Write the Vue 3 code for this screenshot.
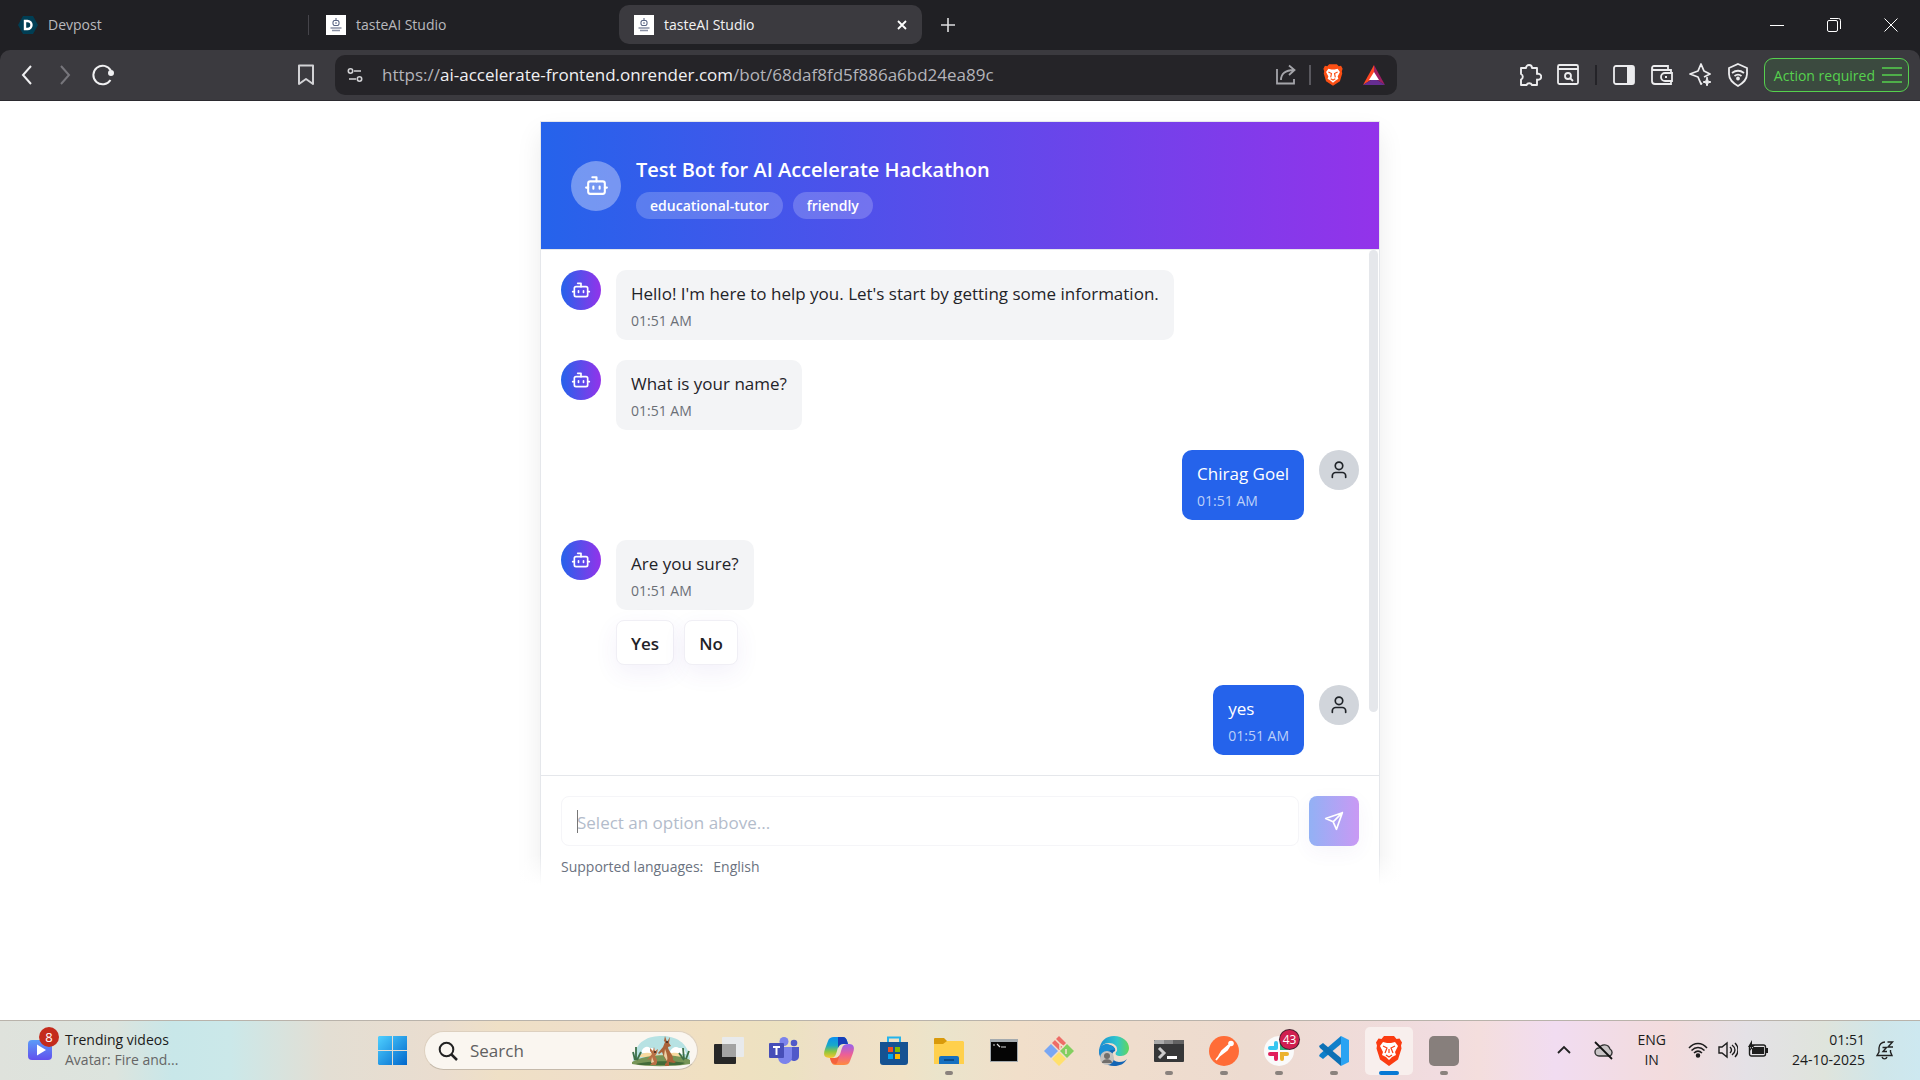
<script setup>
import { ref } from 'vue'

const draft = ref('')
const url = { scheme: 'https://', host: 'ai-accelerate-frontend.onrender.com', path: '/bot/68daf8fd5f886a6bd24ea89c' }

const tabs = [
  { id: 1, title: 'Devpost', icon: 'devpost' },
  { id: 2, title: 'tasteAI Studio', icon: 'taste' },
  { id: 3, title: 'tasteAI Studio', icon: 'taste', active: true },
]

const messages = [
  { id: 1, from: 'bot', text: "Hello! I'm here to help you. Let's start by getting some information.", time: '01:51 AM' },
  { id: 2, from: 'bot', text: 'What is your name?', time: '01:51 AM' },
  { id: 3, from: 'user', text: 'Chirag Goel', time: '01:51 AM' },
  { id: 4, from: 'bot', text: 'Are you sure?', time: '01:51 AM', options: ['Yes', 'No'] },
  { id: 5, from: 'user', text: 'yes', time: '01:51 AM' },
]
</script>

<template>
  <div class="desktop">
    <header class="browser">
      <div class="tabstrip">
        <div v-for="tab in tabs" :key="tab.id" class="tab" :class="{ active: tab.active, divided: tab.id === 1 }">
          <svg v-if="tab.icon === 'devpost'" class="favicon" viewBox="0 0 20 20">
            <path d="M5 1h10l5 9-5 9H5l-5-9z" fill="#003e54" />
            <path d="M7 6v8h2.500a4 4 0 0 0 0-8z" fill="none" stroke="#fff" stroke-width="2.400" />
          </svg>
          <svg v-else class="favicon" viewBox="0 0 20 20">
            <path d="M0 0h20v20H0z" fill="#fff" />
            <path d="M10 3v2M8 5.500h4l1 1.500v2l-1 1.500H8L7 9V7zM9 8h2" fill="none" stroke="#5c6784" stroke-width="1.100" />
            <path d="M4.500 13h11M6 15.500h8" stroke="#8a91a5" stroke-width="1.500" />
          </svg>
          <span class="tab-title">{{ tab.title }}</span>
          <button v-if="tab.active" class="icon-btn tab-close" aria-label="Close tab">
            <svg width="10" height="10" viewBox="0 0 10 10"><path d="M1 1l8 8M9 1L1 9" stroke="#fff" stroke-width="1.800" /></svg>
          </button>
        </div>
        <button class="icon-btn new-tab" aria-label="New tab">
          <svg width="14" height="14" viewBox="0 0 14 14"><path d="M7 0v14M0 7h14" stroke="#dcdcde" stroke-width="1.600" /></svg>
        </button>
        <div class="window-controls">
          <button class="icon-btn" aria-label="Minimize">
            <svg width="14" height="14" viewBox="0 0 14 14"><path d="M0 7.500h14" stroke="#fff" /></svg>
          </button>
          <button class="icon-btn" aria-label="Restore">
            <svg width="14" height="14" viewBox="0 0 14 14" fill="none" stroke="#fff"><rect x=".5" y="2.500" width="10" height="11" rx="1.500" /><path d="M3 .5h8.500a2 2 0 0 1 2 2V11" /></svg>
          </button>
          <button class="icon-btn" aria-label="Close">
            <svg width="14" height="14" viewBox="0 0 14 14"><path d="M.5.5l13 13M13.500.5l-13 13" stroke="#fff" /></svg>
          </button>
        </div>
      </div>

      <div class="toolbar">
        <div class="nav-buttons">
          <button class="icon-btn" aria-label="Back">
            <svg width="24" height="24" viewBox="0 0 24 24"><path d="M16 3L8 12l8 9" fill="none" stroke="#f0f0f2" stroke-width="2" /></svg>
          </button>
          <button class="icon-btn" aria-label="Forward">
            <svg width="24" height="24" viewBox="0 0 24 24"><path d="M8 3l8 9-8 9" fill="none" stroke="#77767c" stroke-width="2" /></svg>
          </button>
          <button class="icon-btn" aria-label="Reload">
            <svg width="24" height="24" viewBox="0 0 24 24" fill="none" stroke="#f0f0f2" stroke-width="2"><path d="M19.500 17A9.300 9.300 0 1 1 19.800 7.500" /><circle cx="20" cy="10" r="2" fill="#f0f0f2" /></svg>
          </button>
        </div>
        <button class="icon-btn bookmark" aria-label="Bookmark">
          <svg width="20" height="22" viewBox="0 0 20 22"><path d="M3 1.500h14V20l-7-5-7 5z" fill="none" stroke="#d2d2d5" stroke-width="2" stroke-linejoin="round" /></svg>
        </button>
        <div class="address">
          <svg width="16" height="16" viewBox="0 0 16 16" fill="none" stroke="#d2d2d5" stroke-width="1.600"><circle cx="3.500" cy="4" r="2.200" /><path d="M7 4h7M2 12h7" /><circle cx="12.500" cy="12" r="2.200" /></svg>
          <p class="url">{{ url.scheme }}<span>{{ url.host }}</span>{{ url.path }}</p>
          <button class="icon-btn" aria-label="Share">
            <svg width="22" height="22" viewBox="0 0 22 22" fill="none" stroke="#a5a5aa" stroke-width="1.800"><path d="M2 5v14.500h17V15" /><path d="M6 16c0-6 4-10 13-10M14 1.500L19.500 6 14 11" /></svg>
          </button>
          <i class="bar"></i>
          <button class="icon-btn shield" aria-label="Brave Shields">
            <svg width="20" height="24" viewBox="0 0 26 30"><path d="M8 1h10l2.500 2.500 3-.5 2 4-1 3 .5 3-3 10L13 29 4 23 1 13l.5-3-1-3 2-4 3 .5z" fill="#fb4f14" /><path d="M7 7l4 1h4l4-1 3 4-3 6 1 3-4 2.500-3 2.500-3-2.500L6 20l1-3-3-6z" fill="#fff" /><path d="M7 11l4 2-1 5M19 11l-4 2 1 5M10 20l3 1.500 3-1.500" fill="none" stroke="#fb4f14" stroke-width="1.500" /></svg>
          </button>
          <button class="icon-btn" aria-label="Rewards">
            <svg width="22" height="20" viewBox="0 0 22 20"><path d="M11 0L0 20l11-7z" fill="#ff4724" /><path d="M11 0l11 20-11-7z" fill="#9e1f63" /><path d="M0 20h22l-11-7z" fill="#662d91" /><path d="M11 7l5 8H6z" fill="#fff" /></svg>
          </button>
        </div>
        <div class="extensions">
          <button class="icon-btn" aria-label="Extensions">
            <svg width="24" height="24" viewBox="0 0 24 24"><path d="M3 5h5a3 3 0 1 1 6 0h5v6a3 3 0 1 1 0 5.500V22h-5a3 3 0 0 0-5.500 0H3v-5.500a3 3 0 0 0 0-5.500z" fill="none" stroke="#ececee" stroke-width="1.900" stroke-linejoin="round" /></svg>
          </button>
          <button class="icon-btn" aria-label="Search tabs">
            <svg width="24" height="24" viewBox="0 0 24 24" fill="none" stroke="#ececee" stroke-width="1.800"><rect x="2" y="2" width="20" height="19" rx="1.500" /><path d="M2 6h20M14 15l3 3" /><circle cx="12" cy="13" r="3" /></svg>
          </button>
          <i class="bar dark"></i>
          <button class="icon-btn" aria-label="Sidebar">
            <svg width="24" height="24" viewBox="0 0 24 24"><rect x="2" y="3" width="20" height="18" rx="2" fill="none" stroke="#ececee" stroke-width="1.800" /><path d="M15 3h6a1 1 0 0 1 1 1v16a1 1 0 0 1-1 1h-6z" fill="#ececee" /></svg>
          </button>
          <button class="icon-btn" aria-label="Wallet">
            <svg width="24" height="24" viewBox="0 0 24 24" fill="none" stroke="#ececee" stroke-width="1.800"><path d="M21 10V7H4a2 2 0 0 1-2-2V18a3 3 0 0 0 3 3h16v-3M2 5a2 2 0 0 1 2-2h14v4" /><path d="M22 10h-7a4 4 0 0 0 0 8h7zM15 14h2" /></svg>
          </button>
          <button class="icon-btn" aria-label="Leo AI">
            <svg width="24" height="24" viewBox="0 0 24 24" fill="none" stroke="#ececee" stroke-width="1.800" stroke-linejoin="round"><path d="M14 20l-1 1-3-7-8-3 8-3 3-7 3 7 6 3-6 3" /><path d="M19 14l1 4 3 1-3 1-1 3-1-3-3-1 3-1z" fill="#ececee" stroke-width="1" /></svg>
          </button>
          <button class="icon-btn" aria-label="VPN">
            <svg width="24" height="24" viewBox="0 0 24 24" fill="none" stroke="#ececee" stroke-width="1.800"><path d="M12 1l9 4v6c0 6-4 9-9 12-5-3-9-6-9-12V5z" /><path d="M6 10c4-3 8-3 12 0M8.500 13c2.500-2 4.500-2 7 0" /><circle cx="12" cy="15.500" r="1" fill="#ececee" /></svg>
          </button>
          <button class="action">
            Action required
            <svg width="20" height="18" viewBox="0 0 20 18"><path d="M0 2h20M0 9h20M0 16h20" stroke="#56d14e" stroke-width="1.600" /></svg>
          </button>
        </div>
      </div>
    </header>

    <main class="page">
      <section class="card">
        <div class="card-head">
          <div class="avatar large">
            <svg width="25" height="25" viewBox="0 0 24 24"><path d="M12 8V4H8M2 14h2M20 14h2M15 13v2M9 13v2" /><rect x="4" y="8" width="16" height="12" rx="2" /></svg>
          </div>
          <div class="card-title">
            <h1>Test Bot for AI Accelerate Hackathon</h1>
            <div class="badges"><span>educational-tutor</span><span>friendly</span></div>
          </div>
        </div>

        <div class="chat">
          <div v-for="m in messages" :key="m.id" class="message" :class="m.from">
            <div class="avatar">
              <svg v-if="m.from === 'bot'" width="20" height="20" viewBox="0 0 24 24"><path d="M12 8V4H8M2 14h2M20 14h2M15 13v2M9 13v2" /><rect x="4" y="8" width="16" height="12" rx="2" /></svg>
              <svg v-else width="20" height="20" viewBox="0 0 24 24"><circle cx="12" cy="7" r="4.500" /><path d="M4 21v-2a4 4 0 0 1 4-4h8a4 4 0 0 1 4 4v2" /></svg>
            </div>
            <div class="body">
              <div class="bubble">
                <p>{{ m.text }}</p>
                <time>{{ m.time }}</time>
              </div>
              <div v-if="m.options" class="options">
                <button v-for="option in m.options" :key="option">{{ option }}</button>
              </div>
            </div>
          </div>
          <i class="scroll-thumb"></i>
        </div>

        <form class="composer" @submit.prevent>
          <div class="row">
            <div class="field">
              <input v-model="draft" type="text" placeholder="Select an option above..." aria-label="Message" />
              <i class="caret"></i>
            </div>
            <button class="send" aria-label="Send">
              <svg width="20" height="20" viewBox="0 0 24 24"><path d="M22 2L15 22l-4-9-9-4zM22 2L11 13" /></svg>
            </button>
          </div>
          <p class="languages"><span>Supported languages:</span><span>English</span></p>
        </form>
      </section>
    </main>

    <footer class="taskbar">
      <button class="widgets">
        <span class="widget-icon">
          <svg width="26" height="22" viewBox="0 0 26 22">
            <defs><linearGradient id="vid" x2="0" y2="1"><stop stop-color="#5b9cf8" /><stop offset="1" stop-color="#6250ee" /></linearGradient></defs>
            <rect x="1" y="1" width="24" height="20" rx="4" fill="url(#vid)" /><path d="M10 5.500v11l9-5.500z" fill="#fff" />
          </svg>
          <b>8</b>
        </span>
        <span class="widget-text"><span>Trending videos</span><small>Avatar: Fire and...</small></span>
      </button>

      <nav class="apps">
        <button class="app" aria-label="Start">
          <svg viewBox="0 0 30 30">
            <defs><linearGradient id="win" x2="1" y2="1"><stop stop-color="#4fd0ff" /><stop offset="1" stop-color="#0067cc" /></linearGradient></defs>
            <path d="M1 0h13v14H0V1zM15 0h14v14H15zM0 15h14v14H1l-1-1zM15 15h14v14H15z" fill="url(#win)" />
          </svg>
        </button>
        <label class="search">
          <svg width="20" height="20" viewBox="0 0 20 20" fill="none" stroke="#222" stroke-width="2"><circle cx="8.500" cy="8.500" r="6.800" /><path d="M13.500 13.500l5.500 5.500" stroke-width="2.500" /></svg>
          <input type="text" placeholder="Search" aria-label="Search" />
          <svg width="60" height="32" viewBox="0 0 60 32">
            <path d="M2 26C4 5 18 1 31 1s26 6 28 23z" fill="#b7e2e3" />
            <path d="M11 18a5 5 0 0 1 8-5 6 6 0 0 1 7 5zM39 19a6 6 0 0 1 9-6 6 6 0 0 1 7 6z" fill="#fff" />
            <path d="M7 22c4-5 10-5 16-3s12 0 18-1 9 1 12 4z" fill="#f8d9a0" />
            <path d="M1 27c12-8 45-9 58-2v4c-18 3-42 3-58 0z" fill="#779557" />
            <path d="M5 29c9-3 38-4 49-1l-5 2H10z" fill="#426b39" />
            <path d="M4 25L2 17m3 8V12m1 13l4-8m43 7l-1-11m3 11l3-8m-5 9l-5-7" stroke="#3e7049" stroke-width="1.800" fill="none" />
            <path d="M30 3l3 3 1-5 2 6 3-5-1 6 2 3-3 1c0 4 6 8 5 13l3 2-2 1-5-1v4h-4v-2l2-2-3-5-2-5-3 2-1-1 5-6 2-5-2-2z" fill="#aa6339" />
            <path d="M19 13l3 3 1-4 1 4 3-2-1 4-2 3c2 3 3 6 1 9h-6l2-2-2-4-3 1 5-6-2-3z" fill="#b97045" />
            <path d="M34 14c2 5 3 9 2 12l-3-5zM21 22l2 5-3 1z" fill="#ecd0a4" /><circle cx="36" cy="7" r="1" fill="#3b2a22" /><circle cx="24" cy="17" r="1" fill="#3b2a22" />
          </svg>
        </label>
        <button class="app" aria-label="Task view">
          <svg viewBox="0 0 30 30"><rect y="8" width="22" height="20" rx="1" fill="#272727" /><rect x="8" y="1" width="22" height="20" rx="1" fill="#e8eaec" /><path d="M8 8h14v13H8z" fill="#a3a3a3" /></svg>
        </button>
        <button class="app" aria-label="Teams">
          <svg viewBox="0 0 30 30"><circle cx="15" cy="5.500" r="4.500" fill="#7b83eb" /><circle cx="25" cy="7" r="3.300" fill="#5059c9" /><path d="M21 11h9v9a5 5 0 0 1-9 3z" fill="#5059c9" /><path d="M9 11h14v9a7 7 0 0 1-14 2z" fill="#7b83eb" /><rect y="7" width="15" height="15" rx="1" fill="#464eb8" /><path d="M4 11h7M7.500 11v8" stroke="#fff" stroke-width="2" /></svg>
        </button>
        <button class="app" aria-label="Copilot">
          <svg viewBox="0 0 30 30">
            <defs>
              <linearGradient id="cp1" x2="0" y2="1"><stop stop-color="#0a8ff0" /><stop offset=".4" stop-color="#19a9c8" /><stop offset=".7" stop-color="#8fc73e" /><stop offset="1" stop-color="#ffc52e" /></linearGradient>
              <linearGradient id="cp2" x2="0" y2="1"><stop stop-color="#9562ef" /><stop offset=".5" stop-color="#ec5f97" /><stop offset="1" stop-color="#ff8b3e" /></linearGradient>
            </defs>
            <path d="M10 1h9c3 0 4 3 5 7h-5c-4 0-5 3-6 7l-1 3c-1 3-3 4-6 4-6 0-7-3-5-9l3-8c1-3 3-4 6-4z" fill="url(#cp1)" />
            <path d="M14 1h5c3 0 4 3 5 7h-5c-3 0-4 2-5 4z" fill="#173eb8" />
            <path d="M20 29h-9c-3 0-4-3-5-7h5c4 0 5-3 6-7l1-3c1-3 3-4 6-4 6 0 7 3 5 9l-3 8c-1 3-3 4-6 4z" fill="url(#cp2)" />
            <path d="M6 22h5c3 0 4-2 5-4l-3 9c-1 2-5 1-6-2z" fill="#f4613c" />
          </svg>
        </button>
        <button class="app" aria-label="Microsoft Store">
          <svg viewBox="0 0 30 30"><path d="M9 7V1.500h12V7" fill="none" stroke="#24b4ec" stroke-width="2" /><path d="M1 6h28v20a3 3 0 0 1-3 3H4a3 3 0 0 1-3-3z" fill="#155292" /><path d="M9 11h5v5H9z" fill="#f25022" /><path d="M16 11h5v5h-5z" fill="#7fba00" /><path d="M9 18h5v5H9z" fill="#00a4ef" /><path d="M16 18h5v5h-5z" fill="#ffb900" /></svg>
        </button>
        <button class="app running" aria-label="File Explorer">
          <svg viewBox="0 0 30 30"><path d="M0 3a1 1 0 0 1 1-1h9l3 3v4H0z" fill="#d99a0b" /><path d="M0 8h9l4-3h16l1 1v22H0z" fill="#ffd04c" /><path d="M5 28v-6a2 2 0 0 1 2-2h16a2 2 0 0 1 2 2v6z" fill="#1670c0" /><path d="M10 24h10" stroke="#0b4c8a" stroke-width="2" /></svg>
        </button>
        <button class="app" aria-label="Command Prompt">
          <svg viewBox="0 0 30 30"><rect x="1" y="3" width="28" height="23" fill="#a4aaae" /><path d="M2 6h26v19H2z" fill="#050505" /><path d="M4 9h2M8 8l3 3M12 11h5" stroke="#d8d8d8" stroke-width="1.200" /></svg>
        </button>
        <button class="app" aria-label="Git">
          <svg viewBox="0 0 30 30"><path d="M15 0l7 7-7 7-7-7z" fill="#ee6c67" /><path d="M7 8l7 7-7 7-7-7z" fill="#79a7f3" /><path d="M23 8l7 7-7 7-7-7z" fill="#82cf60" /><path d="M15 16l7 7-7 7-7-7z" fill="#ffe06d" /><path d="M11 3l5 5v5M16 8l4 3M22 13v5" stroke="#f1dfca" stroke-width="1.600" fill="none" /></svg>
        </button>
        <button class="app" aria-label="Edge">
          <svg viewBox="0 0 30 30">
            <defs><linearGradient id="edge" x2="1"><stop stop-color="#178fd4" /><stop offset=".6" stop-color="#30c6cc" /><stop offset="1" stop-color="#62d65b" /></linearGradient></defs>
            <path d="M0 15C1 5 7 0 15 0c9 0 15 6 15 12 0 5-4 8-8 8-5 0-7-2-4-5 1-5-3-8-8-8-5 0-9 3-10 8z" fill="url(#edge)" />
            <path d="M0 15c1-5 6-8 11-6 4 1 6 4 5 6-5 2-4 11 4 11 4 0 6-1 8-3-3 5-7 7-13 7C7 30 0 24 0 15z" fill="#1465b4" /><path d="M0 15c1-5 6-8 11-6 3 1 5 3 5 5-6-1-10 3-9 10-4-1-7-5-7-9z" fill="#1990d5" />
            <circle cx="8" cy="22" r="7" fill="#c4c2bf" /><circle cx="8" cy="20" r="3" fill="#716e6b" /><path d="M3 27c0-5 10-5 10 0z" fill="#716e6b" />
          </svg>
        </button>
        <button class="app running" aria-label="Terminal">
          <svg viewBox="0 0 30 30"><rect y="4" width="30" height="22" rx="1" fill="#363738" /><path d="M0 8V5l1-1h9v4z" fill="#aaa" /><path d="M10 4h9v4h-9z" fill="#888" /><path d="M19 4h10l1 1v3H19z" fill="#626262" /><path d="M5 12l5 5-5 5" stroke="#ccc" stroke-width="3" fill="none" /><path d="M13 21.500h10" stroke="#fff" stroke-width="3" /></svg>
        </button>
        <button class="app running" aria-label="Postman">
          <svg viewBox="0 0 30 30"><circle cx="15" cy="15" r="15" fill="#ff6c37" /><circle cx="22" cy="7.500" r="2.800" fill="#fff" /><path d="M20 9l-7 6-3 5 8-6 3-5M11 19l-4 5" fill="#fff" stroke="#fff" stroke-width="1.800" /></svg>
        </button>
        <button class="app running" aria-label="Slack">
          <svg viewBox="0 0 30 30"><circle cx="15" cy="15" r="15" fill="#fafafa" /><g stroke-width="4" stroke-linecap="round" fill="none"><path d="M12 7v5M6 12h6" stroke="#36c5f0" /><path d="M18 7v5h5" stroke="#2eb67d" /><path d="M6 18h6v5" stroke="#e01e5a" /><path d="M18 23v-5h5" stroke="#ecb22e" /></g></svg>
          <b class="count">43</b>
        </button>
        <button class="app running" aria-label="Visual Studio Code">
          <svg viewBox="0 0 30 30"><path d="M22 0l8 4v22l-8 4z" fill="#2aa3f3" /><path d="M22 0v8L4 23l-4-3 1-2z" fill="#0f7fca" /><path d="M22 30v-8L4 7 0 10l1 2z" fill="#0c70b5" /></svg>
        </button>
        <button class="app running current" aria-label="Brave">
          <svg viewBox="-2 0 30 30"><path d="M8 0h10l2.500 3 3-.5 2.500 4-1 3 .5 3-3.500 11L13 30 4 23.500 .5 12.500 1 9.500 0 6.500l2.500-4 3 .5z" fill="#fb3c12" /><path d="M7 6l4 1h4l4-1 3 4-3 6 1 3-4 2-3 3-3-3-4-2 1-3-3-6z" fill="#fff" /><path d="M7 10l4 2-2 5M19 10l-4 2 2 5M10 19l3 2 3-2M13 13v4" fill="none" stroke="#fb3c12" stroke-width="1.200" /></svg>
        </button>
        <button class="app running" aria-label="App">
          <svg viewBox="0 0 30 30"><rect width="30" height="30" rx="5" fill="#877f7c" /></svg>
        </button>
      </nav>

      <div class="tray">
        <button class="icon-btn chevron" aria-label="Show hidden icons">
          <svg width="16" height="16" viewBox="0 0 16 16"><path d="M2 11l6-6 6 6" fill="none" stroke="#222" stroke-width="1.800" /></svg>
        </button>
        <svg class="cloud" width="20" height="20" viewBox="0 0 20 20" fill="none" stroke="#333" stroke-width="1.400"><path d="M5 16a4 4 0 0 1 0-8 6 6 0 0 1 11 1 4 4 0 0 1 0 7z" fill="#c9c4c6" /><path d="M1 2l17 17" stroke="#111" stroke-width="1.800" /></svg>
        <span class="lang">ENG<br />IN</span>
        <svg width="20" height="20" viewBox="0 0 20 20" fill="none" stroke="#1d1d1d" stroke-width="1.500"><path d="M1 8c5-6 13-6 18 0M3.500 10.500c4-4 9-4 13 0M6 13c2.500-2.500 5.500-2.500 8 0" /><circle cx="10" cy="15.500" r="1.500" fill="#1d1d1d" /></svg>
        <svg width="20" height="20" viewBox="0 0 20 20" fill="none" stroke="#1d1d1d" stroke-width="1.400"><path d="M1 7h3l5-4v14l-5-4H1zM12 7c2 2 2 4 0 6M14 5c4 3 4 7 0 10M17 3c4 4 4 10 0 14" /></svg>
        <svg width="20" height="20" viewBox="0 0 20 20"><rect x="1.500" y="5" width="16" height="11" rx="2" fill="none" stroke="#1d1d1d" stroke-width="1.400" /><path d="M4 7h12v7H4zM18 8h2v5h-2zM4 0L0 7h3l-2 5 6-7H4z" fill="#1d1d1d" /></svg>
        <span class="clock">01:51<br />24-10-2025</span>
        <svg width="20" height="20" viewBox="0 0 20 20" fill="none" stroke="#222" stroke-width="1.400"><path d="M10 2a6 6 0 0 0-6 6v4l-2 3.500h15L15.500 12v-2M7 17c1 2.500 4 2.500 5 0M12.500 2h5L13 7h5M7.500 7.500h4L8 11.500h4" /></svg>
      </div>
    </footer>
  </div>
</template>

<style>
body { margin: 0; background: #fff; }
</style>

<style scoped>
.desktop { min-height: 100vh; display: flex; flex-direction: column; font-family: "Open Sans", "Noto Sans", sans-serif; color: #1f2328; }
.desktop * { box-sizing: border-box; }
button, input { font: inherit; color: inherit; }
p, h1 { margin: 0; }
svg { display: block; flex-shrink: 0; }
.icon-btn { border: 0; padding: 0; background: none; display: flex; align-items: center; justify-content: center; flex-shrink: 0; }

/* browser chrome */
.browser { background: #202024; }
.tabstrip { height: 50px; display: flex; align-items: center; padding: 0 22px 1px 3px; font-size: 14px; color: #b9b9bd; }
.tab { width: 303px; height: 39px; display: flex; align-items: center; gap: 10px; padding: 0 15px; margin-right: 5px; border-radius: 10px; position: relative; }
.tab.divided::after { content: ""; position: absolute; right: -3px; top: 10px; width: 1px; height: 20px; background: #45444a; }
.tab.active { background: #3b3a3f; color: #f2f2f3; }
.favicon { width: 20px; height: 20px; }
.tab-title { flex: 1; }
.new-tab { width: 42px; height: 39px; }
.window-controls { margin-left: auto; display: flex; gap: 43px; }

.toolbar { height: 51px; background: #3b3a3f; border-bottom: 1px solid #2b2a2f; border-radius: 10px 10px 0 0; display: flex; align-items: center; padding: 0 11px 0 15px; }
.nav-buttons { width: 281px; display: flex; gap: 14px; }
.bookmark { margin-right: 19px; }
.address { flex: 1; max-width: 1062px; height: 40px; display: flex; align-items: center; gap: 12px; padding: 0 12px; background: #252428; border-radius: 10px; color: #b4b4ba; }
.url { flex: 1; padding: 0 0 2px 7px; font-size: 17px; }
.url span { color: #f0f0f2; }
.bar { width: 2px; height: 20px; background: #59585e; }
.bar.dark { background: #242328; margin: 0 1px; }
.shield { margin-right: 8px; }
.extensions { margin-left: auto; display: flex; align-items: center; gap: 14px; }
.action { height: 34px; display: flex; align-items: center; gap: 7px; padding: 0 6px 0 9px; font-size: 14px; white-space: nowrap; color: #56d14e; background: #3b4a3f; border: 1px solid #56d14e; border-radius: 9px; }

/* chat card */
.page { flex: 1; padding-top: 20px; }
.card { width: 840px; max-width: 100%; margin: 0 auto; position: relative; border: 1px solid #e5e7eb; border-bottom: 0; background: #fff; box-shadow: 0 12px 24px rgba(0, 0, 0, .08); }
/* fades the lower edge into the page */
.card::after { content: ""; position: absolute; left: -50px; right: -50px; bottom: -68px; height: 100px; background: linear-gradient(transparent, #fff 31px); }
.card-head { display: flex; align-items: center; gap: 15px; height: 128px; padding: 0 30px; color: #fff; background: linear-gradient(90deg, #2563eb, #9333ea); border-bottom: 1px solid #e5e7eb; }
.avatar { width: 40px; height: 40px; border-radius: 50%; display: flex; align-items: center; justify-content: center; flex-shrink: 0; color: #fff; background: linear-gradient(90deg, #2563eb, #9333ea); }
.avatar svg, .send svg { fill: none; stroke: currentColor; stroke-width: 2; stroke-linecap: round; stroke-linejoin: round; }
.avatar.large { width: 50px; height: 50px; background: rgba(255, 255, 255, .35); }
.card-title { padding-top: 3px; }
.card-title h1 { font-size: 20px; line-height: 28px; font-weight: 600; margin-bottom: 8px; }
.badges { display: flex; gap: 10px; font-size: 14px; font-weight: 600; line-height: 27px; }
.badges span { padding: 0 14px; border-radius: 14px; background: rgba(255, 255, 255, .2); }

.chat { position: relative; display: flex; flex-direction: column; gap: 20px; padding: 20px; }
.message { display: flex; align-items: flex-start; gap: 15px; }
.message.user { flex-direction: row-reverse; }
.message.user .avatar { background: #d1d5db; color: #1f2328; }
.bubble { width: fit-content; padding: 11px 15px 9px; border-radius: 10px; background: #f3f4f6; }
.user .bubble { background: #2563eb; color: #fff; }
.bubble p { font-size: 17px; line-height: 25px; margin-bottom: 5px; }
.bubble time { display: block; font-size: 14px; line-height: 20px; color: #6b6f76; }
.user .bubble time { color: #bcd0f9; }
.options { display: flex; gap: 10px; margin-top: 10px; }
.options button { height: 45px; padding: 1px 14px 0; font-size: 17px; font-weight: 600; background: #fff; border: 1px solid #f0eff5; border-radius: 8px; box-shadow: 0 8px 24px rgba(80, 60, 180, .07); }
.scroll-thumb { position: absolute; right: 1px; top: 0; width: 9px; height: 462px; background: #e5e7eb; border-radius: 5px; }

.composer { position: relative; z-index: 1; border-top: 1px solid #e5e7eb; padding: 20px 20px 9px; }
.row { display: flex; gap: 10px; }
.field { flex: 1; position: relative; }
.field input { width: 100%; height: 50px; padding: 2px 15px 0; font-size: 17px; background: #fff; border: 1px solid #f5f5f8; border-radius: 8px; outline: 0; }
.field input::placeholder { color: #b3bccb; }
.caret { position: absolute; left: 16px; top: 14px; width: 1px; height: 23px; background: #777; }
.send { width: 50px; height: 50px; padding: 0; border: 0; border-radius: 8px; color: #fff; display: flex; align-items: center; justify-content: center; background: linear-gradient(90deg, #92b1f5, #c999f4); box-shadow: 0 6px 20px rgba(80, 60, 180, .05); }
.languages { display: flex; gap: 10px; margin-top: 11px; font-size: 14px; line-height: 20px; color: #6b7280; }

/* taskbar */
.taskbar { height: 60px; border-top: 1px solid #b9b3ab; display: flex; align-items: center; padding-right: 25px; background: linear-gradient(90deg, #dfe2dc 0%, #dce4de 6%, #c8e7e9 9%, #cbe8e9 12%, #e3ded3 17%, #eaddcf 23%, #efe0c6 26%, #efdec9 31%, #f0e0c1 37%, #ece2c1 41%, #eedfc8 43%, #f0e2c6 47%, #eae4cb 49%, #f1dfca 53%, #eddbd0 65%, #f1dce0 75%, #f4dedd 77%, #f1dcf1 81%, #f2dce2 85%, #f3dcdd 87%, #e4e1e6 91%, #dfe4dc 95%, #cfe6ea 98%, #cde8f0 100%); }
.widgets { width: 369px; padding: 0 0 2px 27px; display: flex; align-items: center; gap: 12px; text-align: left; background: none; border: 0; }
.widget-icon { position: relative; }
.widget-icon b { position: absolute; right: -6px; top: -12px; width: 20px; height: 20px; border-radius: 50%; background: #c42b1c; color: #fff; font-size: 13px; font-weight: 400; line-height: 20px; text-align: center; }
.widget-text { display: flex; flex-direction: column; font-size: 14px; line-height: 20px; color: #1b1b1b; }
.widget-text small { font-size: 14px; color: #666; }
.apps { display: flex; align-items: center; gap: 7px; }
.app { position: relative; width: 48px; height: 48px; padding: 0; border: 0; border-radius: 5px; background: none; display: flex; align-items: center; justify-content: center; }
.app svg { width: 30px; height: 30px; }
.app.running::after { content: ""; position: absolute; bottom: 0; left: 20px; width: 8px; height: 4px; border-radius: 2px; background: #8a827d; }
.app.current { background: #f8efed; }
.app.current::after { left: 14px; width: 20px; background: #0878d4; }
.count { position: absolute; right: 4px; top: 3px; width: 19px; height: 19px; border-radius: 50%; background: #d01f50; box-shadow: 0 0 0 1px #4a2030; color: #fff; font-size: 12px; font-weight: 400; line-height: 19px; text-align: center; }
.search { width: 274px; height: 39px; display: flex; align-items: center; gap: 12px; padding: 0 6px 0 13px; border-radius: 20px; background: #faf6f0; border: 1px solid #ddd0bf; border-bottom-color: #c5baab; }
.search input { flex: 1; min-width: 0; padding: 0; border: 0; outline: 0; background: none; font-size: 17px; }
.search input::placeholder { color: #606060; opacity: 1; }
.tray { margin-left: auto; padding-bottom: 2px; display: flex; align-items: center; gap: 10px; font-size: 14px; line-height: 20px; color: #1b1b1b; }
.chevron { margin-right: 12px; }
.cloud { margin-right: 13px; }
.lang { text-align: center; margin-right: 12px; }
.clock { text-align: right; margin-left: 14px; }
</style>
